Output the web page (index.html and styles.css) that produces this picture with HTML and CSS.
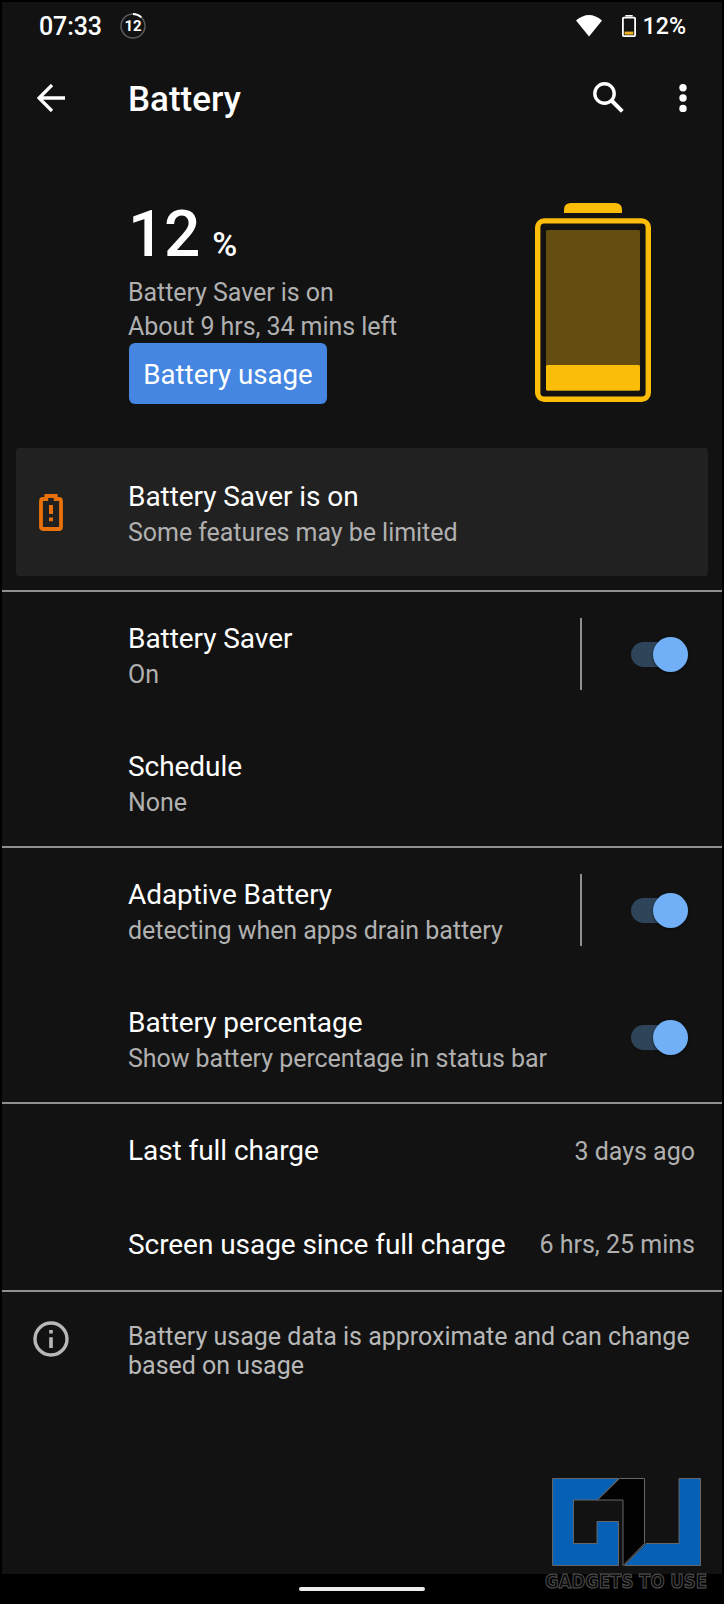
FILE: index.html
```
<!DOCTYPE html>
<html lang="en">
<head>
    <meta charset="UTF-8">
    <meta name="viewport" content="width=device-width, initial-scale=1.0">
    <title>Battery</title>
    <link rel="stylesheet" href="styles.css">
</head>
<body>
    <div class="screen">
        <div class="status-bar">
            <span class="time">07:33</span>
            <svg class="level-ring" width="26" height="26" viewBox="0 0 26 26">
                <circle cx="13" cy="13" r="12" fill="none" stroke="#5c5c5c" stroke-width="1.5"/>
                <path d="M13 1A12 12 0 0 1 21.3 4.4" fill="none" stroke="#fff" stroke-width="2"/>
                <text x="13" y="18" text-anchor="middle">12</text>
            </svg>
            <div class="status-right">
                <svg width="26" height="22" viewBox="0 0 26 22">
                    <path d="M0 5.5Q13-5.5 26 5.5L13 21.5Z" fill="#fff"/>
                </svg>
                <svg class="mini-battery" width="14" height="22" viewBox="0 0 14 22">
                    <path d="M3.3 0h7.4v1.6H3.3z" fill="#fff"/>
                    <rect x="0.9" y="2.6" width="12.2" height="18.5" rx="0.8" fill="none" stroke="#fff" stroke-width="1.8"/>
                    <rect x="2.6" y="16.6" width="8.8" height="3" fill="#f0b323"/>
                </svg>
                <span class="percent">12%</span>
            </div>
        </div>

        <div class="app-bar">
            <svg class="back" width="28" height="28" viewBox="0 0 28 28">
                <path d="M28 14H2M15 1L2 14L15 27" fill="none" stroke="#fff" stroke-width="3.3"/>
            </svg>
            <h1>Battery</h1>
            <svg class="search" width="31" height="31" viewBox="0 0 31 31">
                <circle cx="11.5" cy="11.5" r="9.7" fill="none" stroke="#fff" stroke-width="3.4"/>
                <path d="M18.5 18.5L29.3 29.3" stroke="#fff" stroke-width="4"/>
            </svg>
            <svg class="more" width="8" height="28" viewBox="0 0 8 28">
                <circle cx="4" cy="3.7" r="3.7" fill="#fff"/>
                <circle cx="4" cy="14" r="3.7" fill="#fff"/>
                <circle cx="4" cy="24.4" r="3.7" fill="#fff"/>
            </svg>
        </div>

        <div class="header">
            <div class="summary">
                <div class="level">12<span>%</span></div>
                <p>Battery Saver is on</p>
                <p>About 9 hrs, 34 mins left</p>
                <button class="btn">Battery usage</button>
            </div>
            <svg class="battery" width="116" height="199" viewBox="0 0 116 199">
                <path d="M29 10V7Q29 0 36 0H80Q87 0 87 7V10Z" fill="#fbbd08"/>
                <rect x="2.7" y="17.9" width="110.6" height="178.4" rx="6.5" fill="none" stroke="#fbbd08" stroke-width="5.4"/>
                <rect x="11" y="27" width="94" height="161" rx="1.5" fill="#644e0f"/>
                <rect x="11" y="162" width="94" height="25.5" rx="1.5" fill="#fbbd08"/>
            </svg>
        </div>

        <div class="card">
            <svg class="saver-icon" width="24" height="37" viewBox="0 0 24 37">
                <path d="M7.3 2H16.7V5H20Q22 5 22 7V33Q22 35 20 35H4Q2 35 2 33V7Q2 5 4 5H7.3Z" fill="none" stroke="#e8710a" stroke-width="3.8"/>
                <path d="M10 11h4v9h-4zM10 23.5h4v3.7h-4z" fill="#e8710a"/>
            </svg>
            <div class="text">
                <h2>Battery Saver is on</h2>
                <p>Some features may be limited</p>
            </div>
        </div>

        <div class="group">
            <div class="row">
                <div class="text">
                    <h2>Battery Saver</h2>
                    <p>On</p>
                </div>
                <div class="separator"></div>
                <div class="switch"></div>
            </div>
            <div class="row">
                <div class="text">
                    <h2>Schedule</h2>
                    <p>None</p>
                </div>
            </div>
        </div>

        <div class="group">
            <div class="row">
                <div class="text">
                    <h2>Adaptive Battery</h2>
                    <p>detecting when apps drain battery</p>
                </div>
                <div class="separator"></div>
                <div class="switch"></div>
            </div>
            <div class="row">
                <div class="text">
                    <h2>Battery percentage</h2>
                    <p>Show battery percentage in status bar</p>
                </div>
                <div class="switch"></div>
            </div>
        </div>

        <div class="group">
            <div class="row small">
                <h2>Last full charge</h2>
                <p>3 days ago</p>
            </div>
            <div class="row small">
                <h2>Screen usage since full charge</h2>
                <p>6 hrs, 25 mins</p>
            </div>
        </div>

        <div class="group footer">
            <svg class="info" width="36" height="36" viewBox="0 0 36 36">
                <circle cx="18" cy="18" r="16" fill="none" stroke="#b8b8b8" stroke-width="3.4"/>
                <path d="M16.2 9h3.6v3.6h-3.6zM16.2 16.2h3.6V27h-3.6z" fill="#b8b8b8"/>
            </svg>
            <p>Battery usage data is approximate and can change based on usage</p>
        </div>
    </div>

    <div class="nav-bar">
        <div class="handle"></div>
    </div>

    <svg class="watermark" width="170" height="124" viewBox="0 0 170 124">
        <g stroke="#666" stroke-width="1">
            <path d="M9.5 2.5H75.5L54.5 24H30.5V67.5H54V45.5H75.5V89.5H9.5Z" fill="#0560b6"/>
            <path d="M76.5 2.5H101.5V67.5L80 89.5V24H54.5Z" fill="#020202"/>
            <path d="M136 2.5H157.5V89.5H81.5L103 67.5H136Z" fill="#0560b6"/>
        </g>
        <text x="2" y="111.5" textLength="162" lengthAdjust="spacingAndGlyphs">GADGETS TO USE</text>
    </svg>
</body>
</html>
```
FILE: styles.css
```
* {
    box-sizing: border-box;
}

body {
    position: relative;
    margin: 0;
    padding: 2px 2px 0;
    width: 724px;
    height: 1604px;
    overflow: hidden;
    font-family: 'Roboto', sans-serif;
    background: #000;
    color: #fff;
}

h1, h2, p {
    margin: 0;
    font-weight: 400;
}

svg {
    display: block;
    flex-shrink: 0;
}

.screen {
    height: 1572px;
    background: #121212;
}

.status-bar {
    display: flex;
    align-items: center;
    height: 48px;
    padding: 0 36px 0 37px;
    font-size: 25px;
    font-weight: 500;
}

.time {
    padding-top: 1px;
    letter-spacing: -0.1px;
}

.level-ring {
    margin: -1px 0 0 18px;
}

.level-ring text {
    font-size: 15px;
    font-weight: 700;
    fill: #fff;
}

.status-right {
    display: flex;
    align-items: center;
    margin-left: auto;
}

.mini-battery {
    margin: -1px 7px 0 20px;
}

.percent {
    font-size: 23.2px;
}

.app-bar {
    display: flex;
    align-items: center;
    height: 96px;
    padding: 0 35px;
}

.app-bar h1 {
    flex: 1;
    margin-left: 63px;
    padding-top: 3px;
    font-size: 35px;
    font-weight: 500;
}

.search {
    margin: -1px 55px 0 0;
}

.header {
    display: flex;
    justify-content: space-between;
    height: 302px;
    padding: 57px 71px 0 126px;
}

.level {
    height: 73px;
    font-size: 64px;
    line-height: 63px;
    font-weight: 500;
    letter-spacing: -0.3px;
}

.level span {
    margin-left: 12px;
    font-size: 34px;
}

.summary p {
    font-size: 25px;
    line-height: 34px;
    letter-spacing: -0.06px;
    color: #b0b0b0;
}

.btn {
    display: block;
    width: 198px;
    height: 61px;
    margin: -1px 0 0 1px;
    padding: 2px 0 0;
    font-family: inherit;
    font-size: 27.7px;
    color: #fff;
    background: #4486e1;
    border: none;
    border-radius: 6px;
}

.card {
    display: flex;
    height: 128px;
    margin: 0 14px 14px;
    padding-left: 23px;
    background: #212121;
    border-radius: 3px;
}

.saver-icon {
    margin: 46px 65px 0 0;
}

.text {
    flex: 1;
    padding-top: 32px;
}

h2 {
    font-size: 28px;
    line-height: 34px;
    letter-spacing: -0.06px;
    white-space: nowrap;
}

.text p {
    margin-top: 2px;
    font-size: 25px;
    line-height: 34px;
    letter-spacing: -0.05px;
    color: #b0b0b0;
    white-space: nowrap;
}

.group {
    border-top: 2px solid #8f8f8f;
}

.row {
    display: flex;
    align-items: center;
    height: 128px;
    padding: 0 34px 2px 126px;
}

.row .text {
    align-self: flex-start;
}

.row:first-child {
    height: 126px;
}

.row:first-child .text {
    padding-top: 30px;
}

.separator {
    width: 2px;
    height: 72px;
    margin-right: 49px;
    background: #8f8f8f;
}

.switch {
    position: relative;
    width: 57px;
    height: 25px;
    background: #2e4459;
    border-radius: 13px;
}

.switch::after {
    content: '';
    position: absolute;
    top: -5px;
    right: 0;
    width: 35px;
    height: 35px;
    background: #71b0f6;
    border-radius: 50%;
    box-shadow: 0 1px 3px rgba(0, 0, 0, 0.5);
}

.row.small {
    justify-content: space-between;
    height: 94px;
    padding: 3px 27px 0 126px;
}

.row.small:first-child {
    height: 92px;
    padding-top: 2px;
}

.row.small p {
    font-size: 25px;
    color: #b0b0b0;
}

.footer {
    display: flex;
    padding: 29px 25px 0 31px;
}

.footer p {
    margin-left: 59px;
    padding-top: 1px;
    font-size: 25px;
    line-height: 29px;
    color: #b8b8b8;
}

.nav-bar {
    height: 30px;
    padding-top: 13px;
}

.handle {
    width: 126px;
    height: 4px;
    margin: 0 auto;
    background: #ededed;
    border-radius: 2px;
}

.watermark {
    position: absolute;
    left: 543px;
    top: 1476px;
}

/* thin outlined lettering under the logo */
.watermark text {
    font-family: 'DejaVu Sans', sans-serif;
    font-size: 19px;
    font-weight: 700;
    fill: #0a0a0a;
    stroke: #555;
    stroke-width: 1px;
}
```
